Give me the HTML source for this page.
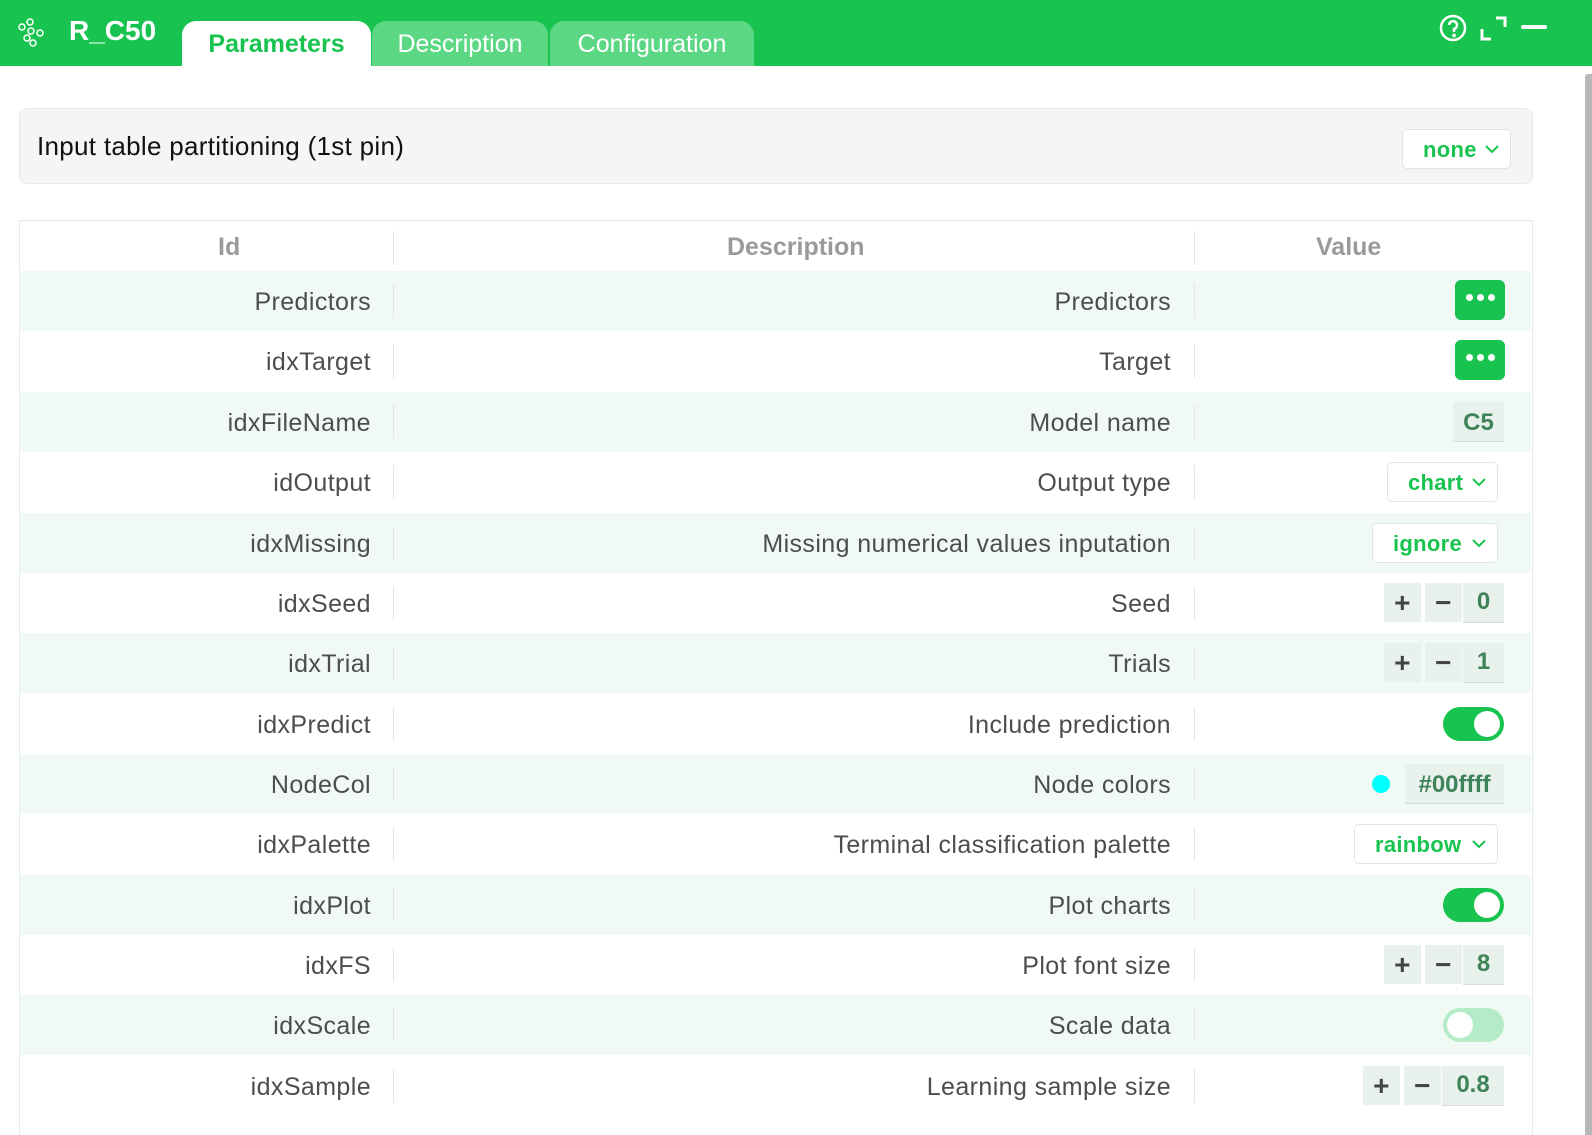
<!DOCTYPE html><html><head><meta charset="utf-8"><style>
*{box-sizing:border-box;margin:0;padding:0}
body{width:1592px;height:1135px;overflow:hidden;background:#fff;font-family:"Liberation Sans",sans-serif;position:relative;color:#4d4d4d}
.top{position:absolute;left:0;top:0;width:1592px;height:66px;background:#19c34f}
.tab{position:absolute;top:21px;height:45px;border-radius:14px 14px 0 0;font-size:25px;line-height:47px;text-align:center;color:#fff;background:#5cd784}
.a{position:absolute}
.row{position:absolute;left:20px;width:1511px;height:60px;font-size:25px;letter-spacing:0.4px}
.row.t{background:#f1f9f4}
.id{position:absolute;right:1160px;top:1px;line-height:60px}
.ds{position:absolute;right:360px;top:1px;line-height:60px}
.sep{position:absolute;top:13px;width:1px;height:34px;background:#e2e6e3}
.sel{position:absolute;height:40px;top:10px;border:1px solid #dfe6e1;border-radius:5px;background:#fff;color:#19c34f;font-weight:bold;font-size:22px;line-height:40px;padding-left:20px;letter-spacing:0.3px}
.sel svg{position:absolute;right:10px;top:14px}
.btn{position:absolute;left:1435px;top:9px;width:50px;height:40px;background:#19c34f;border-radius:6px}
.btn i{position:absolute;top:14px;width:7px;height:7px;border-radius:50%;background:#fff}
.box{position:absolute;top:10px;height:40px;background:#e9f1ec;border-bottom:1px solid #d5ddd8;color:#3f8458;font-weight:bold;font-size:24px;line-height:41px;text-align:center;letter-spacing:0}
.pm{position:absolute;top:10px;height:39px;background:#e9f1ec;color:#444;font-size:28px;line-height:39px;text-align:center;font-weight:bold}
.tg{position:absolute;left:1423px;top:13px;width:61px;height:34px;border-radius:17px;background:#19c34f}
.tg i{position:absolute;top:4px;width:26px;height:26px;border-radius:50%;background:#fff}
</style></head><body>
<div class="top"></div>
<svg class="a" style="left:16px;top:17px" width="30" height="30" viewBox="0 0 30 30" fill="none" stroke="#fff" stroke-width="1.5"><circle cx="6" cy="10" r="3"/><circle cx="14" cy="5" r="3"/><circle cx="15" cy="14" r="3"/><circle cx="24" cy="16" r="3"/><circle cx="11" cy="21" r="3"/><circle cx="17" cy="26" r="3"/></svg>
<div class="a" style="left:69px;top:15px;color:#fff;font-weight:bold;font-size:28px">R_C50</div>
<div class="tab" style="left:182px;width:189px;background:#fff;color:#19c34f;font-weight:bold">Parameters</div>
<div class="tab" style="left:372px;width:176px">Description</div>
<div class="tab" style="left:550px;width:204px">Configuration</div>
<svg class="a" style="left:1438px;top:13px" width="32" height="30" viewBox="0 0 32 30" fill="none" stroke="#fff" stroke-width="2.5"><circle cx="15" cy="15" r="12"/><path d="M11 12a4 4 0 1 1 5 4v3"/><circle cx="16" cy="22.5" r="0.6" fill="#fff"/></svg>
<svg class="a" style="left:1480px;top:15px" width="28" height="28" viewBox="0 0 28 28" fill="none" stroke="#fff" stroke-width="3"><path d="M2 14v10h9M16 3h9v9"/></svg>
<div class="a" style="left:1521px;top:25px;width:26px;height:4px;border-radius:2px;background:#fff"></div>
<div class="a" style="left:1585px;top:74px;width:7px;height:1061px;background:#b8b8b8;border-radius:3px 0 0 0"></div>

<div class="a" style="left:19px;top:108px;width:1514px;height:76px;background:#f3f6f4;border:1px solid #e5eae7;border-radius:8px"></div>
<div class="a" style="left:37px;top:131px;font-size:26px;color:#111;letter-spacing:0.3px">Input table partitioning (1st pin)</div>
<div class="sel" style="left:1402px;top:129px;width:109px">none<svg width="16" height="10" viewBox="0 0 16 10" fill="none" stroke="#19c34f" stroke-width="2"><path d="M2 2l6 6 6-6"/></svg></div>

<div class="a" style="left:19px;top:220px;width:1514px;height:915px;border:1px solid #e8ece9;border-bottom:none"></div>
<div class="a" style="left:218px;top:233px;font-size:25px;font-weight:bold;color:#9a9a9a">Id</div>
<div class="a" style="left:727px;top:233px;font-size:25px;font-weight:bold;color:#9a9a9a">Description</div>
<div class="a" style="left:1316px;top:233px;font-size:25px;font-weight:bold;color:#9a9a9a">Value</div>
<div class="sep a" style="left:393px;top:231px"></div><div class="sep a" style="left:1194px;top:231px"></div>

<div class="row t" style="top:271px"><div class="id">Predictors</div><div class="sep" style="left:373px"></div><div class="ds">Predictors</div><div class="sep" style="left:1174px"></div><div class="btn"><i style="left:11px"></i><i style="left:22px"></i><i style="left:33px"></i></div></div>
<div class="row" style="top:331px"><div class="id">idxTarget</div><div class="sep" style="left:373px"></div><div class="ds">Target</div><div class="sep" style="left:1174px"></div><div class="btn"><i style="left:11px"></i><i style="left:22px"></i><i style="left:33px"></i></div></div>
<div class="row t" style="top:392px"><div class="id">idxFileName</div><div class="sep" style="left:373px"></div><div class="ds">Model name</div><div class="sep" style="left:1174px"></div><div class="box" style="left:1433px;width:51px">C5</div></div>
<div class="row" style="top:452px"><div class="id">idOutput</div><div class="sep" style="left:373px"></div><div class="ds">Output type</div><div class="sep" style="left:1174px"></div><div class="sel" style="left:1367px;width:111px">chart<svg width="16" height="10" viewBox="0 0 16 10" fill="none" stroke="#19c34f" stroke-width="2"><path d="M2 2l6 6 6-6"/></svg></div></div>
<div class="row t" style="top:513px"><div class="id">idxMissing</div><div class="sep" style="left:373px"></div><div class="ds">Missing numerical values inputation</div><div class="sep" style="left:1174px"></div><div class="sel" style="left:1352px;width:126px">ignore<svg width="16" height="10" viewBox="0 0 16 10" fill="none" stroke="#19c34f" stroke-width="2"><path d="M2 2l6 6 6-6"/></svg></div></div>
<div class="row" style="top:573px"><div class="id">idxSeed</div><div class="sep" style="left:373px"></div><div class="ds">Seed</div><div class="sep" style="left:1174px"></div><div class="pm" style="left:1364px;width:37px">+</div><div class="pm" style="left:1405px;width:37px">−</div><div class="box" style="left:1443px;width:41px;line-height:37px">0</div></div>
<div class="row t" style="top:633px"><div class="id">idxTrial</div><div class="sep" style="left:373px"></div><div class="ds">Trials</div><div class="sep" style="left:1174px"></div><div class="pm" style="left:1364px;width:37px">+</div><div class="pm" style="left:1405px;width:37px">−</div><div class="box" style="left:1443px;width:41px;line-height:37px">1</div></div>
<div class="row" style="top:694px"><div class="id">idxPredict</div><div class="sep" style="left:373px"></div><div class="ds">Include prediction</div><div class="sep" style="left:1174px"></div><div class="tg"><i style="left:31px"></i></div></div>
<div class="row t" style="top:754px"><div class="id">NodeCol</div><div class="sep" style="left:373px"></div><div class="ds">Node colors</div><div class="sep" style="left:1174px"></div><div class="a" style="left:1352px;top:21px;width:18px;height:18px;border-radius:50%;background:#00ffff"></div><div class="box" style="left:1385px;width:99px">#00ffff</div></div>
<div class="row" style="top:814px"><div class="id">idxPalette</div><div class="sep" style="left:373px"></div><div class="ds">Terminal classification palette</div><div class="sep" style="left:1174px"></div><div class="sel" style="left:1334px;width:144px">rainbow<svg width="16" height="10" viewBox="0 0 16 10" fill="none" stroke="#19c34f" stroke-width="2"><path d="M2 2l6 6 6-6"/></svg></div></div>
<div class="row t" style="top:875px"><div class="id">idxPlot</div><div class="sep" style="left:373px"></div><div class="ds">Plot charts</div><div class="sep" style="left:1174px"></div><div class="tg"><i style="left:31px"></i></div></div>
<div class="row" style="top:935px"><div class="id">idxFS</div><div class="sep" style="left:373px"></div><div class="ds">Plot font size</div><div class="sep" style="left:1174px"></div><div class="pm" style="left:1364px;width:37px">+</div><div class="pm" style="left:1405px;width:37px">−</div><div class="box" style="left:1443px;width:41px;line-height:37px">8</div></div>
<div class="row t" style="top:995px"><div class="id">idxScale</div><div class="sep" style="left:373px"></div><div class="ds">Scale data</div><div class="sep" style="left:1174px"></div><div class="tg" style="background:#b5ecc7"><i style="left:4px"></i></div></div>
<div class="row" style="top:1056px"><div class="id">idxSample</div><div class="sep" style="left:373px"></div><div class="ds">Learning sample size</div><div class="sep" style="left:1174px"></div><div class="pm" style="left:1343px;width:37px">+</div><div class="pm" style="left:1384px;width:37px">−</div><div class="box" style="left:1422px;width:62px;line-height:37px">0.8</div></div>
</body></html>
